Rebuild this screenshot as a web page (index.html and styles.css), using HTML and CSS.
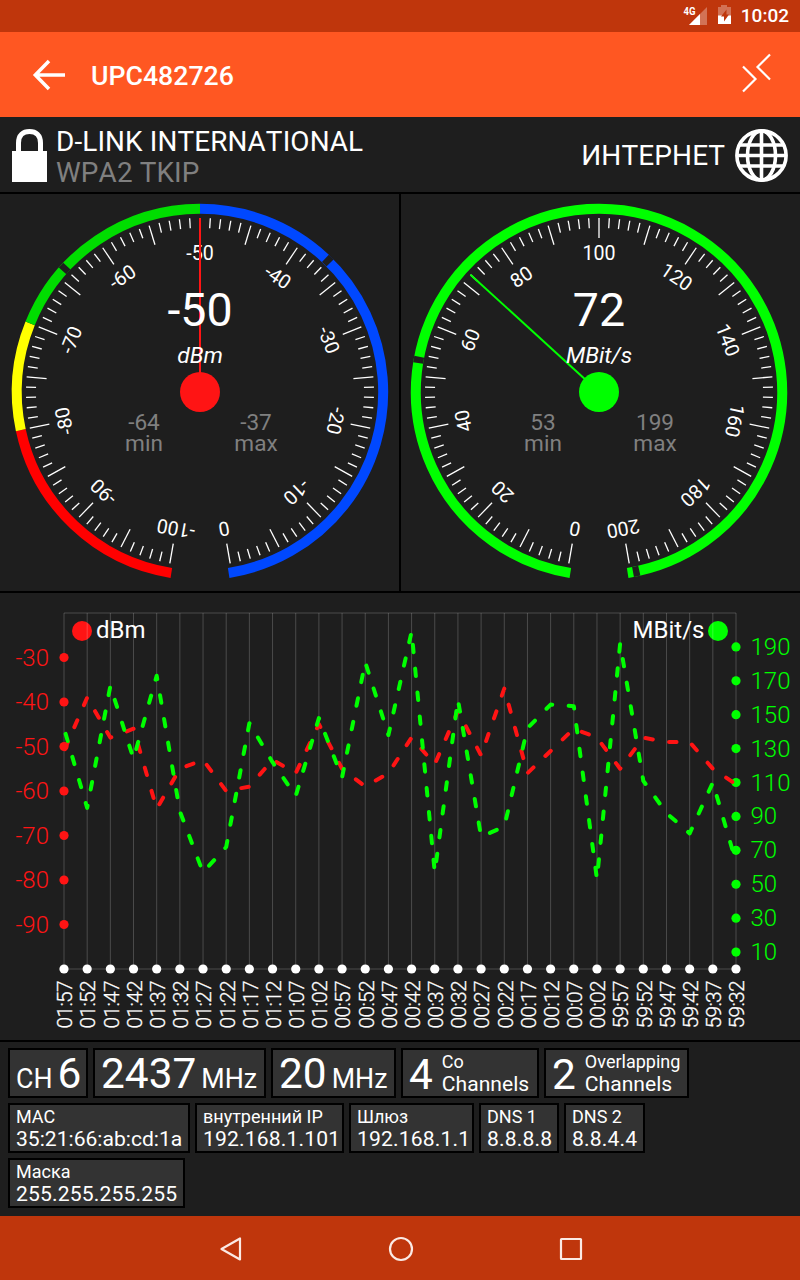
FILE: index.html
```html
<!DOCTYPE html>
<html lang="ru">
<head>
    <meta charset="UTF-8">
    <meta name="viewport" content="width=device-width, initial-scale=1.0">
    <title>UPC482726</title>
    <link rel="stylesheet" href="styles.css">
</head>
<body>
    <div class="status-bar">
        <svg class="status-icons" width="50" height="32" viewBox="0 0 50 32">
            <path d="M6 25 L24 7 V25 Z" fill="#fff" opacity="0.3"/>
            <path d="M6 25 L17 14 V25 Z" fill="#fff"/>
            <text class="net-type" x="0.5" y="15" textLength="12" lengthAdjust="spacingAndGlyphs">4G</text>
            <path d="M38 5 H44 V7 H48 V16 H35 V7 H38 Z" fill="#fff" opacity="0.3"/>
            <path d="M35 15.5 H48 V24 H35 Z" fill="#fff"/>
            <path d="M43.5 9.5 L38 16.5 H41 V21.5 L46 14.5 H43.5 Z" fill="#bf360c"/>
        </svg>
        <span class="clock">10:02</span>
    </div>

    <div class="toolbar">
        <svg class="back" width="34" height="34" viewBox="0 0 34 34">
            <path d="M17 3 L3.3 17 L17 31 M3.8 17 H33" fill="none" stroke="#fff" stroke-width="3.5"/>
        </svg>
        <h1>UPC482726</h1>
        <svg class="collapse" width="30" height="40" viewBox="0 0 30 40">
            <path d="M1 13.5 L13.5 26 L1 38.5 M28 1.5 L15.5 14 L28 26.5" fill="none" stroke="#fff" stroke-width="2.2"/>
        </svg>
    </div>

    <div class="network">
        <svg class="lock" width="35" height="54" viewBox="0 0 35 54">
            <path d="M6.5 24 V14 C6.5 6 11 2.6 17.5 2.6 S28.5 6 28.5 14 V24" fill="none" stroke="#fff" stroke-width="5"/>
            <rect x="0" y="22" width="35" height="31" fill="#fff"/>
        </svg>
        <div class="vendor">
            <div class="vendor-name">D-LINK INTERNATIONAL</div>
            <div class="security">WPA2 TKIP</div>
        </div>
        <span class="internet">ИНТЕРНЕТ</span>
        <svg class="globe" width="54" height="54" viewBox="0 0 54 54">
            <g fill="none" stroke="#fff" stroke-width="3.6">
                <circle cx="26.5" cy="26.5" r="24.6"/>
                <ellipse cx="26.5" cy="26.5" rx="14" ry="24.6"/>
                <path d="M26.5 2 V51 M2 26.5 H51 M5 16 H48 M5 37 H48"/>
            </g>
        </svg>
    </div>

    <div class="gauges">
        <svg id="signalGauge" class="gauge" width="399" height="397" viewBox="0 0 399 397"></svg>
        <svg id="speedGauge" class="gauge" width="399" height="397" viewBox="0 0 399 397"></svg>
    </div>

    <div class="history">
        <svg id="chart" width="800" height="447" viewBox="0 0 800 447"></svg>
    </div>

    <div class="info">
        <div class="info-row">
            <div class="chip big w-ch"><small>CH</small><b>6</b></div>
            <div class="chip big w-freq"><b>2437</b><small>MHz</small></div>
            <div class="chip big w-width"><b>20</b><small>MHz</small></div>
            <div class="chip count w-co">
                <b>4</b>
                <div><div class="label">Co</div><div class="value">Channels</div></div>
            </div>
            <div class="chip count w-over">
                <b>2</b>
                <div><div class="label">Overlapping</div><div class="value">Channels</div></div>
            </div>
        </div>
        <div class="info-row">
            <div class="chip w-mac"><div class="label">MAC</div><div class="value">35:21:66:ab:cd:1a</div></div>
            <div class="chip ip w-ip"><div class="label">внутренний IP</div><div class="value">192.168.1.101</div></div>
            <div class="chip ip w-gate"><div class="label">Шлюз</div><div class="value">192.168.1.1</div></div>
            <div class="chip ip w-dns1"><div class="label">DNS 1</div><div class="value">8.8.8.8</div></div>
            <div class="chip ip w-dns2"><div class="label">DNS 2</div><div class="value">8.8.4.4</div></div>
        </div>
        <div class="info-row">
            <div class="chip ip w-mask"><div class="label">Маска</div><div class="value">255.255.255.255</div></div>
        </div>
    </div>

    <div class="nav-bar">
        <svg width="24" height="26" viewBox="0 0 24 26"><path d="M2.5 13 L21 2.5 V23.5 Z"/></svg>
        <svg width="26" height="26" viewBox="0 0 26 26"><circle cx="13" cy="13" r="11"/></svg>
        <svg width="24" height="26" viewBox="0 0 24 26"><rect x="2" y="3" width="20" height="20" rx="0.5"/></svg>
    </div>

    <script src="script.js"></script>
</body>
</html>
```
FILE: styles.css
```css
body {
    margin: 0;
    width: 800px;
    height: 1280px;
    display: flex;
    flex-direction: column;
    background-color: #000;
    color: #fff;
    font-family: Roboto, "Liberation Sans", sans-serif;
    font-kerning: none;
    overflow: hidden;
}
svg {
    display: block;
    flex: none;
}

/* top bars */
.status-bar {
    height: 32px;
    box-sizing: border-box;
    padding-right: 11px;
    background-color: #bf360c;
    display: flex;
    justify-content: flex-end;
    align-items: center;
}
.status-icons {
    margin-right: 8px;
}
.net-type {
    font-size: 11px;
    font-weight: bold;
    fill: #fff;
}
.clock {
    font-size: 19px;
    font-weight: 500;
    line-height: 32px;
}
.toolbar {
    height: 85px;
    box-sizing: border-box;
    padding: 0 28px 0 32px;
    background-color: #ff5722;
    display: flex;
    align-items: center;
}
.toolbar h1 {
    margin: 2px 0 0 25px;
    font-size: 26.7px;
    font-weight: 500;
    flex: 1;
}
.toolbar .collapse {
    margin-bottom: 3px;
}

/* network name */
.network {
    height: 75px;
    box-sizing: border-box;
    padding: 2px 11px 0 12px;
    background-color: #1e1e1e;
    display: flex;
    align-items: center;
}
.vendor {
    flex: 1;
    margin: 2px 0 0 9px;
    font-size: 27.9px;
    line-height: 31px;
    letter-spacing: 0.12px;
}
.security {
    color: #808080;
}
.internet {
    font-size: 28px;
    letter-spacing: 0.12px;
    margin-right: 10px;
}

/* gauges */
.gauges {
    margin-top: 2px;
    display: flex;
    gap: 2px;
}
.gauge {
    background-color: #1e1e1e;
}
.gauge text {
    fill: #fff;
    text-anchor: middle;
}
.tick {
    stroke: #fff;
    stroke-width: 1.3;
}
.gauge .tick-label {
    font-size: 19.6px;
}
.gauge .reading {
    font-size: 46.5px;
}
.gauge .unit {
    font-size: 22.8px;
    font-style: italic;
}
.gauge .range {
    font-size: 22.6px;
    fill: #808080;
}

/* history chart */
.history {
    margin-top: 2px;
    background-color: #1e1e1e;
}
.grid {
    stroke: #fff;
    stroke-opacity: 0.2;
    fill: none;
}
.axis-label {
    font-size: 24px;
    font-weight: 300;
}
.time-label {
    font-size: 21px;
    font-weight: 300;
    letter-spacing: -0.7px;
    fill: #fff;
    stroke: #fff;
    stroke-width: 0.3;
}
.legend {
    font-size: 24px;
    fill: #fff;
}
.series {
    fill: none;
    stroke-width: 4;
    stroke-linecap: round;
    stroke-linejoin: round;
    stroke-dasharray: 7.5 16.5;
}

/* info chips */
.info {
    height: 174px;
    box-sizing: border-box;
    margin-top: 2px;
    padding: 6px 8px;
    background-color: #1e1e1e;
    display: flex;
    flex-direction: column;
    gap: 5px;
}
.info-row {
    display: flex;
    gap: 5px;
}
.chip {
    height: 50px;
    box-sizing: border-box;
    padding: 1px 0 0 6px;
    border: 2px solid #000;
    background-color: #333;
    white-space: nowrap;
}
.chip b {
    font-size: 42.4px;
    font-weight: normal;
    line-height: 48px;
}
.big {
    display: flex;
    align-items: baseline;
    gap: 5px;
    padding-top: 0;
}
.big small {
    font-size: 26.8px;
}
.count {
    display: flex;
    gap: 9px;
}
.count b {
    line-height: 47px;
}
.label {
    font-size: 18px;
    line-height: 22px;
}
.value {
    font-size: 21.1px;
    line-height: 22px;
}
.ip .value {
    letter-spacing: 0.15px;
}
.w-ch { width: 80px; }
.w-freq { width: 173px; }
.w-width { width: 125px; }
.w-co { width: 138px; }
.w-over { width: 145px; }
.w-mac { width: 182px; }
.w-ip { width: 149px; }
.w-gate { width: 125px; }
.w-dns1 { width: 80px; }
.w-dns2 { width: 81px; }
.w-mask { width: 177px; }

/* navigation */
.nav-bar {
    height: 64px;
    box-sizing: border-box;
    padding: 1px 0 0 1px;
    background-color: #bf360c;
    display: flex;
    justify-content: center;
    align-items: center;
    gap: 145px;
}
.nav-bar svg {
    fill: none;
    stroke: #fbeae5;
    stroke-width: 2.2;
    stroke-linejoin: round;
}
```
FILE: script.js
```js
var NS = 'http://www.w3.org/2000/svg';

function add(parent, name, attrs, text) {
    var el = document.createElementNS(NS, name);
    for (var key in attrs) {
        el.setAttribute(key, attrs[key]);
    }
    if (text !== undefined) {
        el.textContent = text;
    }
    parent.appendChild(el);
    return el;
}

// angle 0 is straight up, positive is clockwise
function polar(cx, cy, r, deg) {
    var a = deg * Math.PI / 180;
    return (cx + r * Math.sin(a)).toFixed(2) + ' ' + (cy - r * Math.cos(a)).toFixed(2);
}

function arc(svg, cx, cy, from, to, color) {
    var r = 183.2;
    var large = to - from > 180 ? 1 : 0;
    add(svg, 'path', {
        d: 'M' + polar(cx, cy, r, from) + ' A' + r + ' ' + r + ' 0 ' + large + ' 1 ' + polar(cx, cy, r, to),
        fill: 'none', stroke: color, 'stroke-width': 10
    });
}

function rangeLabel(svg, x, value, name) {
    var text = add(svg, 'text', { 'class': 'range' });
    add(text, 'tspan', { x: x, y: 236 }, value);
    add(text, 'tspan', { x: x, y: 257 }, name);
}

function drawGauge(id, o) {
    var svg = document.getElementById(id);
    var cx = o.cx, cy = 198;
    var mid = (o.from + o.to) / 2;
    var scale = 340 / (o.to - o.from);

    function angle(v) { return (v - mid) * scale; }

    o.zones.forEach(function (z) { arc(svg, cx, cy, z[0], z[1], z[2]); });
    arc(svg, cx, cy, angle(o.min) - 1, angle(o.min) + 1, '#1e1e1e');
    arc(svg, cx, cy, angle(o.max) - 1, angle(o.max) + 1, '#1e1e1e');

    for (var i = 0; i <= 100; i++) {
        var a = -170 + i * 3.4;
        var inner = i % 5 === 0 ? 154 : 164;
        add(svg, 'path', { 'class': 'tick', d: 'M' + polar(cx, cy, 174, a) + ' L' + polar(cx, cy, inner, a) });
        if (i % 10 === 0) {
            add(svg, 'text', {
                'class': 'tick-label', x: cx, y: cy - 132,
                transform: 'rotate(' + a + ' ' + cx + ' ' + cy + ')'
            }, o.from + i * (o.to - o.from) / 100);
        }
    }

    add(svg, 'path', {
        d: 'M' + cx + ' ' + cy + ' L' + polar(cx, cy, 174, angle(o.value)),
        stroke: o.color, 'stroke-width': 2
    });
    add(svg, 'circle', { cx: cx, cy: cy, r: 20, fill: o.color });
    add(svg, 'text', { 'class': 'reading', x: cx, y: 132 }, o.value);
    add(svg, 'text', { 'class': 'unit', x: cx, y: 169 }, o.unit);
    rangeLabel(svg, cx - 56, o.min, 'min');
    rangeLabel(svg, cx + 56, o.max, 'max');
}

drawGauge('signalGauge', {
    cx: 200, from: -100, to: 0, value: -50, min: -64, max: -37, unit: 'dBm', color: '#ff1414',
    zones: [[-171, -102, '#ff0000'], [-102, -68, '#ffff00'], [-68, 0, '#00dd00'], [0, 171, '#0048ff']]
});
drawGauge('speedGauge', {
    cx: 198, from: 0, to: 200, value: 72, min: 53, max: 199, unit: 'MBit/s', color: '#00ff00',
    zones: [[-171, 171, '#00ff00']]
});

// history
var times = ['01:57', '01:52', '01:47', '01:42', '01:37', '01:32', '01:27', '01:22', '01:17', '01:12',
    '01:07', '01:02', '00:57', '00:52', '00:47', '00:42', '00:37', '00:32', '00:27', '00:22',
    '00:17', '00:12', '00:07', '00:02', '59:57', '59:52', '59:47', '59:42', '59:37', '59:32'];
var signal = [-51, -39, -48, -46, -64, -55, -53, -60, -59, -53, -56, -45, -55, -59, -56,
    -48, -54, -42, -52, -37, -56, -51, -46, -48, -55, -48, -49, -49, -55, -58.5];
var speed = [142, 95, 167, 124, 173, 93, 57, 72, 145, 122, 102, 148, 113, 181, 138,
    199, 57, 159, 78, 84, 142, 156, 155, 53, 192, 111, 92, 80, 110, 63];

var LEFT = 64, RIGHT = 736, TOP = 20, BOTTOM = 376;
var chart = document.getElementById('chart');
var step = (RIGHT - LEFT) / (times.length - 1);

function signalY(v) { return BOTTOM - (v + 100) * (BOTTOM - TOP) / 80; }
function speedY(v) { return BOTTOM - v * (BOTTOM - TOP) / 210; }

function drawSeries(values, toY, color, offset) {
    var points = values.map(function (v, i) {
        return (LEFT + i * step).toFixed(2) + ',' + toY(v).toFixed(2);
    });
    add(chart, 'polyline', {
        'class': 'series', points: points.join(' '), stroke: color, 'stroke-dashoffset': offset
    });
}

add(chart, 'circle', { cx: 82, cy: 38, r: 10, fill: '#ff1414' });
add(chart, 'text', { 'class': 'legend', x: 96, y: 45 }, 'dBm');
add(chart, 'text', { 'class': 'legend', x: 704.5, y: 45, 'text-anchor': 'end' }, 'MBit/s');
add(chart, 'circle', { cx: 718, cy: 38, r: 10, fill: '#00ff00' });

add(chart, 'path', { 'class': 'grid', d: 'M' + LEFT + ' ' + TOP + ' H' + RIGHT + ' M' + LEFT + ' ' + BOTTOM + ' H' + RIGHT });
times.forEach(function (t, i) {
    var x = LEFT + i * step;
    add(chart, 'path', { 'class': 'grid', d: 'M' + x + ' ' + TOP + ' V' + BOTTOM });
    add(chart, 'circle', { cx: x, cy: BOTTOM, r: 4.6, fill: '#fff' });
    add(chart, 'text', {
        'class': 'time-label',
        transform: 'translate(' + (x + 8.3) + ' 435.5) rotate(-90)'
    }, t);
});

for (var s = -30; s >= -90; s -= 10) {
    add(chart, 'circle', { cx: LEFT, cy: signalY(s), r: 4.6, fill: '#ff1414' });
    add(chart, 'text', { 'class': 'axis-label', x: 49, y: signalY(s) + 8.4, 'text-anchor': 'end', fill: '#ff1414' }, s);
}
for (var m = 10; m <= 190; m += 20) {
    add(chart, 'circle', { cx: RIGHT, cy: speedY(m), r: 4.6, fill: '#00ff00' });
    add(chart, 'text', { 'class': 'axis-label', x: 750.5, y: speedY(m) + 8, fill: '#00ff00' }, m);
}

drawSeries(signal, signalY, '#ff1414', -2);
drawSeries(speed, speedY, '#00ff00', -5.8);
```
